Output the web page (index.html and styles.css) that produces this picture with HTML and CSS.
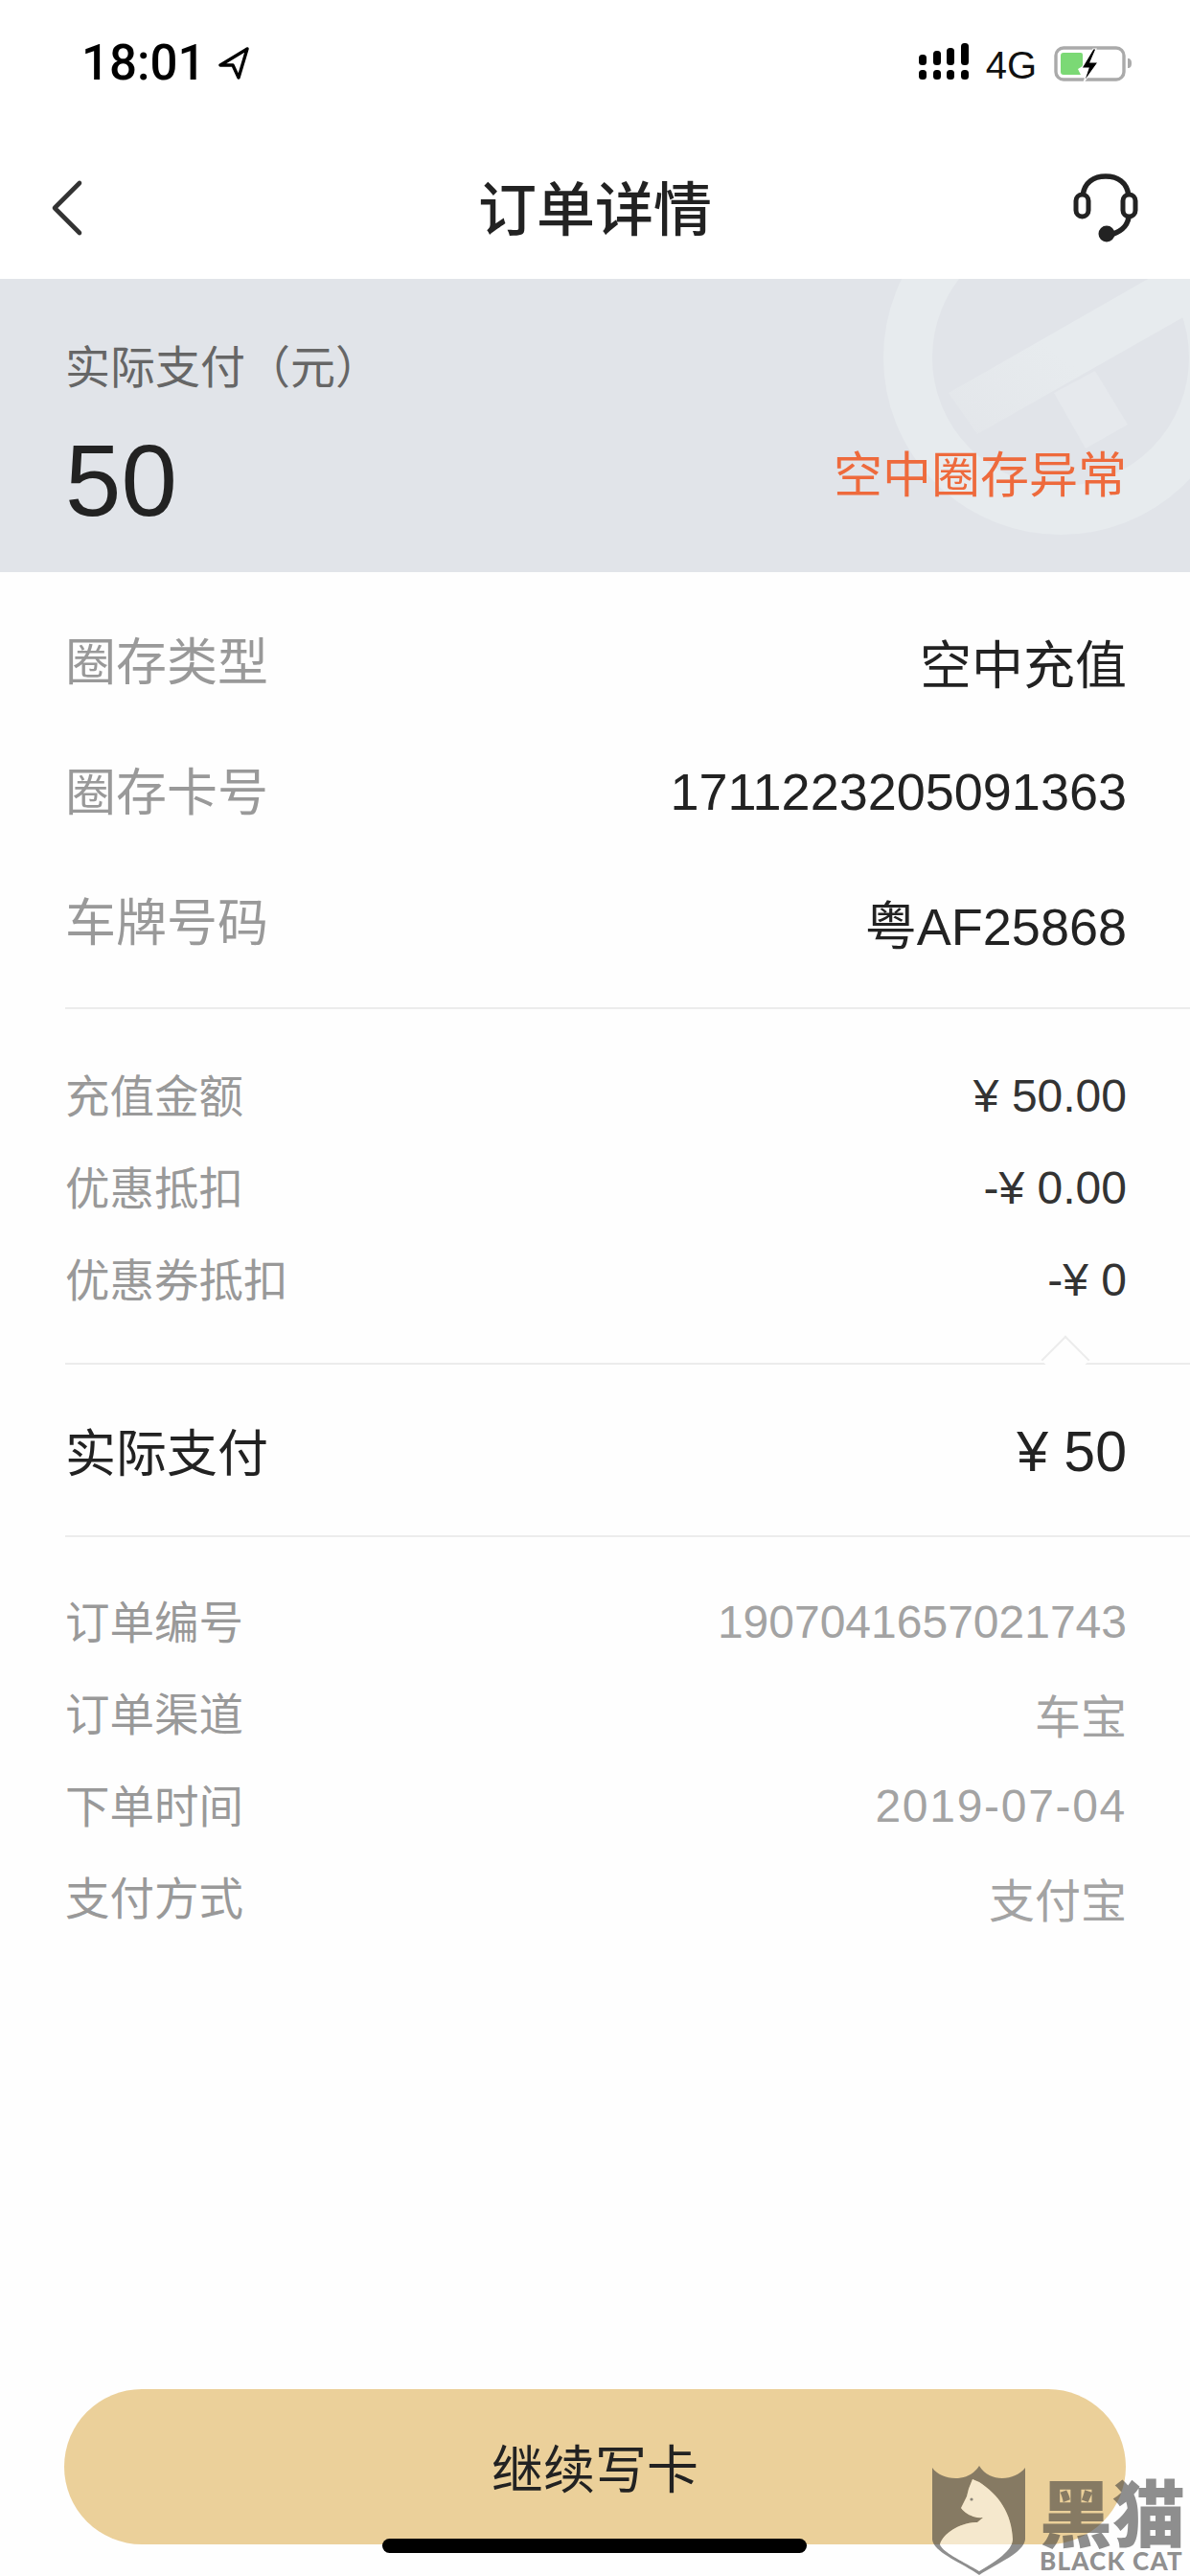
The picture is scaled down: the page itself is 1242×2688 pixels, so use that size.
FILE: index.html
```html
<!DOCTYPE html>
<html lang="zh">
<head>
<meta charset="utf-8">
<title>订单详情</title>
<link rel="stylesheet" href="styles.css">
</head>
<body>
<div class="page">
  <header class="status">
    <div class="status-left">
      <span class="time">18:01</span>
      <svg class="loc" viewBox="0 0 34 34" width="34" height="34"><path d="M31 2 3 19h13l6 13z" fill="none" stroke="#000" stroke-width="3.4" stroke-linejoin="round"/></svg>
    </div>
    <div class="status-right">
      <svg class="signal" viewBox="0 0 52 40" width="52" height="40" fill="#000">
        <rect x="0" y="13" width="8" height="11" rx="3.5"/><rect x="15" y="9" width="8" height="15" rx="3.5"/><rect x="29" y="6" width="8" height="18" rx="3.5"/><rect x="44" y="1" width="8" height="23" rx="3.5"/>
        <rect x="0" y="29" width="8" height="10" rx="3.5"/><rect x="15" y="29" width="8" height="10" rx="3.5"/><rect x="29" y="29" width="8" height="10" rx="3.5"/><rect x="44" y="29" width="8" height="10" rx="3.5"/>
      </svg>
      <span class="net">4G</span>
      <svg class="battery" viewBox="0 0 84 40" width="84" height="40">
        <rect x="2" y="2" width="71" height="33" rx="8" fill="none" stroke="#aaa" stroke-width="3.4"/>
        <path d="M77 13c3 0 4 2 4 5s-1 5-4 5z" fill="#aaa"/>
        <path d="M10 7h18q2 0 2 2v12l-5 3 3 6H10q-3 0-3-3V10q0-3 3-3z" fill="#7bd975"/>
        <path d="M41 3 29 23h7l-5 15 15-21h-8l6-14z" fill="#000" stroke="#fff" stroke-width="1.2"/>
      </svg>
    </div>
  </header>

  <nav class="nav">
    <svg class="back" viewBox="0 0 40 60" width="40" height="60"><path d="M33 4 7 30l26 26" fill="none" stroke="#333" stroke-width="4.6" stroke-linecap="round" stroke-linejoin="round"/></svg>
    <h1 class="title">订单详情</h1>
    <svg class="headset" viewBox="0 0 70 74" width="70" height="74" fill="none" stroke="#222">
      <path d="M11 24C13 10 23 4 35 4s22 6 24 20" stroke-width="5.5"/>
      <rect x="4" y="23" width="13" height="23" rx="6.5" stroke-width="5"/>
      <rect x="53" y="23" width="13" height="23" rx="6.5" stroke-width="5"/>
      <path d="M59 47c-2 11-10 16-22 19" stroke-width="5.5"/>
      <circle cx="36" cy="64" r="8.5" fill="#222" stroke="none"/>
    </svg>
  </nav>

  <section class="hero">
    <svg class="hero-mark" viewBox="800 291 442 306" width="442" height="306">
      <defs>
        <linearGradient id="barFade" x1="0" y1="1" x2="1" y2="0">
          <stop offset="0" stop-color="#e3e6ea"/><stop offset="0.45" stop-color="#e7ebee"/>
        </linearGradient>
      </defs>
      <circle cx="1107" cy="373" r="159.5" fill="none" stroke="#e7ebee" stroke-width="51"/>
      <path d="M990 410 1242 266v61L1020 453z" fill="url(#barFade)"/>
      <path d="M1100 410 1143 387 1177 443 1133 468z" fill="#e6e9ed"/>
    </svg>
    <div class="hero-body">
      <div class="hero-label">实际支付（元）</div>
      <div class="hero-row">
        <span class="hero-amount">50</span>
        <span class="hero-state">空中圈存异常</span>
      </div>
    </div>
  </section>

  <section class="group group-main">
    <div class="row row-lg"><span class="label">圈存类型</span><span class="value">空中充值</span></div>
    <div class="row row-lg"><span class="label">圈存卡号</span><span class="value">1711223205091363</span></div>
    <div class="row row-lg"><span class="label">车牌号码</span><span class="value">粤AF25868</span></div>
  </section>

  <section class="group group-fees">
    <div class="row row-sm"><span class="label">充值金额</span><span class="value">¥ 50.00</span></div>
    <div class="row row-sm"><span class="label">优惠抵扣</span><span class="value">-¥ 0.00</span></div>
    <div class="row row-sm"><span class="label">优惠券抵扣</span><span class="value">-¥ 0</span></div>
    <span class="caret"></span>
  </section>

  <section class="group group-total">
    <div class="row row-total"><span class="total-label">实际支付</span><span class="total-value">¥ 50</span></div>
  </section>

  <section class="group-info">
    <div class="row row-sm"><span class="label">订单编号</span><span class="info">1907041657021743</span></div>
    <div class="row row-sm"><span class="label">订单渠道</span><span class="info">车宝</span></div>
    <div class="row row-sm"><span class="label">下单时间</span><span class="info info-date">2019-07-04</span></div>
    <div class="row row-sm"><span class="label">支付方式</span><span class="info">支付宝</span></div>
  </section>

  <div class="footer">
    <button class="cta">继续写卡</button>
  </div>

  <div class="home-bar"></div>

  <div class="watermark">
    <svg class="wm-shield" viewBox="973 2573 98 115" width="98" height="115">
      <path fill-rule="evenodd" fill="rgba(60,60,60,.58)" d="M973 2575C982 2588 1010 2592 1022 2573C1034 2592 1060 2588 1070 2575V2650C1068 2664 1042 2674 1022 2687C1004 2674 975 2664 973 2650ZM1015 2587 1022 2590C1042 2603 1056 2622 1057 2650C1056 2662 1040 2672 1022 2683C1008 2674 984 2664 981 2655C984 2644 1002 2632 1020 2632L1026 2627C1018 2628 1008 2624 1003 2617L1009 2605 1011 2597Z"/>
      <path fill="rgba(255,255,255,.5)" d="M1015 2587 1022 2590C1042 2603 1056 2622 1057 2650C1056 2662 1040 2672 1022 2683C1008 2674 984 2664 981 2655C984 2644 1002 2632 1020 2632L1026 2627C1018 2628 1008 2624 1003 2617L1009 2605 1011 2597Z"/>
      <circle cx="1014" cy="2608" r="1.6" fill="rgba(60,60,60,.58)"/>
    </svg>
    <div class="wm-text">
      <div class="wm-cn">黑猫</div>
      <div class="wm-en">BLACK CAT</div>
    </div>
  </div>
</div>
</body>
</html>
```

FILE: styles.css
```css
* { box-sizing: border-box; }
html, body { margin: 0; padding: 0; background: #fefefe; }
body { font-family: "Liberation Sans", "Noto Sans CJK SC", sans-serif; }
.page { position: relative; width: 1242px; height: 2688px; overflow: hidden; display: flex; flex-direction: column; background: #fefefe; }

.status { height: 132px; flex: none; display: flex; justify-content: space-between; align-items: flex-start; padding: 35px 58px 0 85px; background: #fff; }
.status-left { display: flex; align-items: center; gap: 13px; height: 62px; }
.time { font-family: "Roboto", "Liberation Sans", sans-serif; font-weight: 500; font-size: 51px; line-height: 62px; color: #000; }
.status-right { display: flex; align-items: flex-start; }
.signal { margin-top: 9px; }
.net { font-size: 40px; line-height: 40px; margin: 13px 18px 0 18px; color: #111; }
.battery { margin-top: 13px; }

.nav { height: 159px; flex: none; display: flex; align-items: center; justify-content: space-between; padding: 10px 53px 0 50px; background: #fff; position: relative; }
.title { position: absolute; left: 0; right: 0; top: 38px; margin: 0; text-align: center; font-size: 61px; line-height: 90px; font-weight: 500; color: #222; font-family: "Noto Sans CJK SC", sans-serif; }

.hero { position: relative; height: 306px; flex: none; background: #e1e4e9; overflow: hidden; }
.hero-mark { position: absolute; right: 0; top: 0; }
.hero-body { position: relative; padding: 60px 66px 0 68px; }
.hero-label { font-size: 47px; line-height: 66px; color: #666; }
.hero-row { display: flex; justify-content: space-between; align-items: center; margin-top: 27px; }
.hero-amount { font-size: 105px; line-height: 116px; color: #222; }
.hero-state { font-size: 51px; color: #ee6a3c; line-height: 70px; margin-top: -10px; }

.group { margin-left: 68px; padding-right: 66px; border-bottom: 2px solid #ececec; position: relative; flex: none; }
.group-main { height: 456px; padding-top: 25px; }
.group-fees { height: 371px; padding-top: 42px; }
.group-total { height: 180px; }
.group-info { margin-left: 68px; padding: 40px 66px 0 0; flex: none; }

.row { display: flex; justify-content: space-between; align-items: center; }
.row-lg { height: 136px; font-size: 54px; }
.row-lg .label { font-size: 53px; position: relative; top: -3px; }
.row-sm { height: 96px; font-size: 48px; }
.row-sm .label { font-size: 46.5px; position: relative; top: -3px; }
.label { color: #999; }
.value { color: #222; }
.row-sm .value { color: #333; }
.info { color: #a3a3a3; }
.info-date { letter-spacing: 1.7px; }
.row-total { height: 178px; }
.total-label { font-size: 53px; color: #222; }
.total-value { font-size: 59px; color: #222; position: relative; top: 2px; }

.caret { position: absolute; right: 112px; bottom: -15px; width: 36px; height: 36px; transform: rotate(45deg); background: #fefefe; border-left: 2px solid #ececec; border-top: 2px solid #ececec; }

.footer { margin-top: auto; flex: none; padding: 0 67px 33px; }
.cta { display: block; width: 100%; height: 162px; border: 0; border-radius: 81px; background: #ebd09a; font-family: "Noto Sans CJK SC", sans-serif; font-size: 54px; line-height: 150px; color: #222; padding: 0; }

.home-bar { position: absolute; left: 399px; top: 2649px; width: 443px; height: 15px; border-radius: 8px; background: #000; }

.watermark { position: absolute; left: 973px; top: 2573px; display: flex; gap: 14px; width: 269px; }
.wm-shield { flex: none; }
.wm-text { color: rgba(60,60,60,.58); white-space: nowrap; }
.wm-cn { font-family: "Noto Sans CJK SC", sans-serif; font-weight: 900; font-size: 76px; line-height: 80px; margin-top: 6px; }
.wm-en { font-family: "Lato", sans-serif; font-weight: 900; font-size: 26px; line-height: 26px; letter-spacing: 1.2px; }
```
